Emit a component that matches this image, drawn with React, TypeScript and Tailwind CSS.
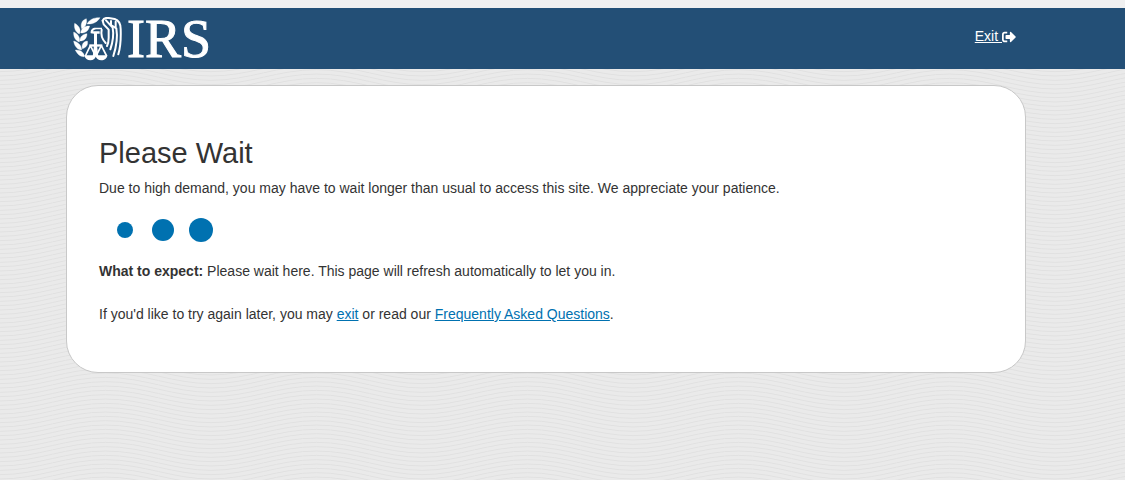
import { FaSignOutAlt } from "react-icons/fa"

const waveOffsets = Array.from({ length: 12 }, (_, i) => -17 + (i * 13) / 3)

function WaveBackground() {
  return (
    <svg className="absolute inset-0 -z-10 h-full w-full" aria-hidden="true">
      <defs>
        <pattern id="waves" width="211" height="13" patternUnits="userSpaceOnUse">
          {waveOffsets.map((y) => (
            <path
              key={y}
              d={`M-1 ${y + 15}H0C38 ${y + 15} 67 ${y} 105.5 ${y}S173 ${y + 15} 211 ${y + 15}h1`}
              fill="none"
              stroke="#e1e1e1"
              strokeWidth="1"
            />
          ))}
        </pattern>
      </defs>
      <rect width="100%" height="100%" fill="url(#waves)" />
    </svg>
  )
}

function Emblem() {
  return (
    <svg viewBox="20 20 150 132" className="h-11 w-[50px]" fill="#fff" aria-hidden="true">
      {/* Olive branch */}
      <g stroke="#fff" strokeWidth="1" strokeLinejoin="round">
        <path d="M101 22C84 21 69 27 62 41C78 42 93 36 101 22Z" />
        <path d="M60 25C46 29 42 42 46 55C57 51 63 39 60 25Z" />
        <path d="M25 39C22 53 28 66 39 71C45 60 39 46 25 39Z" />
        <path d="M70 47C56 46 44 54 43 68C57 69 67 61 70 47Z" />
        <path d="M22 65C21 81 28 91 39 95C42 82 35 70 22 65Z" />
        <path d="M62 70C49 71 40 80 41 92C54 92 62 83 62 70Z" />
        <path d="M22 92C24 108 33 118 46 119C46 106 36 95 22 92Z" />
        <path d="M63 92C51 94 45 102 48 115C60 112 66 103 63 92Z" />
        <path d="M27 119C33 132 43 140 54 139C54 127 43 118 27 119Z" />
      </g>
      {/* Eagle head and the scale's post */}
      <path d="M73 69C72 58 78 52 88 52H107V57H90C84 57 81 60 80 63H100V70H92V105H83V70Z" />
      <path d="M69 102H108V109H69Z" />
      <path d="M83 105H92L96 139H79Z" />
      {/* Wing */}
      <g fill="none" stroke="#fff" strokeWidth="6" strokeLinecap="round" strokeLinejoin="round">
        <path d="M109 31C111 25 119 22 127 23L145 26C157 30 163 41 163 56C164 84 163 109 156 132" />
        <path d="M109 31L112 42L127 58V82C127 92 126 99 122 107" />
        <path d="M119 30L139 52C142 69 140 94 132 117" />
        <path d="M134 32V44L150 54C154 77 150 109 141 137" />
        <path d="M106 58C103 72 106 85 118 98" />
        <path d="M148 34V49" />
      </g>
      {/* Scale pans */}
      <g fill="none" stroke="#fff" strokeWidth="5" strokeLinejoin="round">
        <path d="M72 106L57 137M72 106L88 137" />
        <path d="M105 106L89 137M105 106L121 137" />
      </g>
      <path d="M54 135H89C88 145 81 150 72 150S56 145 54 135Z" />
      <path d="M87 135H123C122 145 114 150 105 150S89 145 87 135Z" />
    </svg>
  )
}

function LoadingDots() {
  return (
    <div className="mt-4 flex h-8 items-center pl-[18px]" role="status" aria-label="Waiting">
      <span className="size-4 rounded-full bg-[#0071b0]" />
      <span className="ml-[19px] size-[22px] rounded-full bg-[#0071b0]" />
      <span className="ml-[15px] size-6 rounded-full bg-[#0071b0]" />
    </div>
  )
}

export default function App() {
  return (
    <div className="relative isolate min-h-screen bg-[#eaeaea] font-['Liberation_Sans',Arial,sans-serif] text-sm text-[#333]">
      <WaveBackground />

      <div className="h-2 bg-[#f0f0f0]" />
      <header className="bg-[#234f76] pr-[33px]">
        <div className="mx-auto flex h-[61px] max-w-[960px] items-center justify-between pl-[7px] pr-[10px] text-white">
          <div className="flex items-center gap-1">
            <Emblem />
            <span className="font-['Liberation_Serif','Times_New_Roman',serif] text-[54px] leading-[60px] [-webkit-text-stroke:1px_#fff]">
              IRS
            </span>
          </div>
          <a href="#exit" className="flex items-end pb-1.5">
            <span className="whitespace-pre underline">Exit </span>
            <FaSignOutAlt className="mb-0.5 size-[14px]" aria-hidden="true" />
          </a>
        </div>
      </header>

      <div className="pt-4 pr-[33px]">
        <main className="mx-auto max-w-[960px] rounded-[32px] border border-[#c8c8c8] bg-white px-8 pt-12 pb-12">
          <h1 className="text-[29px] leading-[38px]">Please Wait</h1>
          <p className="mt-1.5 leading-5">
            Due to high demand, you may have to wait longer than usual to access this site. We appreciate your patience.
          </p>
          <LoadingDots />
          <p className="mt-[15px] leading-5">
            <strong>What to expect:</strong> Please wait here. This page will refresh automatically to let you in.
          </p>
          <p className="mt-[23px] leading-5">
            If you'd like to try again later, you may{" "}
            <a href="#exit" className="text-[#0071b0] underline">exit</a> or read our{" "}
            <a href="#faq" className="text-[#0071b0] underline">Frequently Asked Questions</a>.
          </p>
        </main>
      </div>
    </div>
  )
}
